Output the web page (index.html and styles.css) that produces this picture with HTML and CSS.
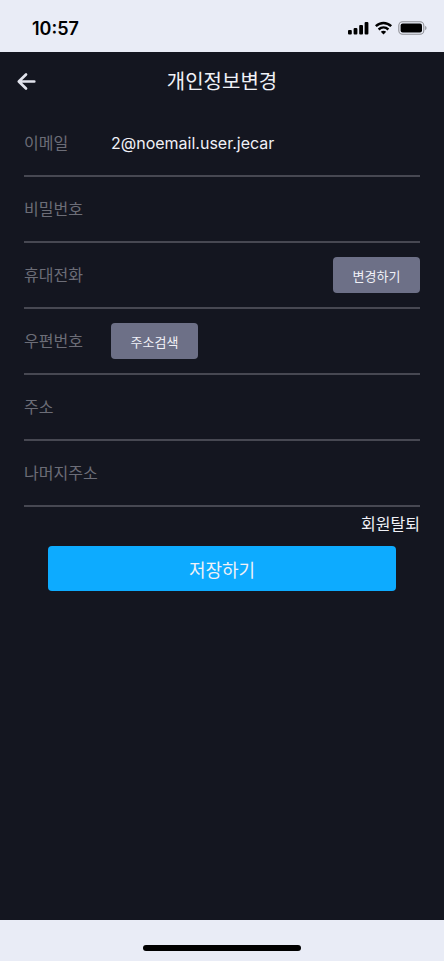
FILE: index.html
```html
<!DOCTYPE html>
<html lang="ko">
<head>
<meta charset="utf-8">
<meta name="viewport" content="width=device-width, initial-scale=1">
<title>개인정보변경</title>
<link rel="stylesheet" href="styles.css">
</head>
<body>
<div class="status">
  <time class="clock">10:57</time>
  <div class="indicators">
    <svg width="22" height="14" viewBox="0 0 22 14" aria-hidden="true">
      <rect x="0" y="9" width="3.800" height="4.600" rx="1"/>
      <rect x="5.600" y="7" width="3.800" height="6.600" rx="1"/>
      <rect x="11.200" y="4" width="3.800" height="9.600" rx="1"/>
      <rect x="16.600" y="1" width="3.800" height="12.600" rx="1"/>
    </svg>
    <svg width="18" height="14" viewBox="0 0 18 14" aria-hidden="true">
      <g fill="none" stroke="#000" stroke-width="2.400">
        <path d="M.8 5.200C5.300.9 11.700.9 16.200 5.200"/>
        <path d="M3.600 8.500C6.500 5.900 10.500 5.900 13.400 8.500"/>
      </g>
      <path d="M5.800 10.800C7.400 9.500 9.600 9.500 11.200 10.800L8.500 13.600Z"/>
    </svg>
    <svg width="30" height="14" viewBox="0 0 30 14" aria-hidden="true">
      <rect x=".8" y=".8" width="25" height="12.400" rx="3.800" fill="none" stroke="#8f9096" stroke-width="1.100"/>
      <rect x="2.600" y="2.600" width="21.400" height="8.800" rx="2"/>
      <path d="M27.200 4.800C29 5.600 29 8.400 27.200 9.200Z" fill="#8f9096"/>
    </svg>
  </div>
</div>
<div class="screen">
  <header class="bar">
    <button class="back" type="button" aria-label="뒤로">
      <svg width="20" height="20" viewBox="0 0 20 20" aria-hidden="true">
        <path d="M10 2.500L2.800 9.500L10 16.500M3.500 9.500H18.300" fill="none" stroke="#e1e3ec" stroke-width="2.700" stroke-linecap="round" stroke-linejoin="round"/>
      </svg>
    </button>
    <h1 class="title">개인정보변경</h1>
  </header>
  <form class="form">
    <div class="row">
      <label class="label" for="email">이메일</label>
      <input class="field" id="email" type="text" value="2@noemail.user.jecar">
    </div>
    <div class="row">
      <label class="label" for="password">비밀번호</label>
      <input class="field" id="password" type="password">
    </div>
    <div class="row">
      <label class="label" for="phone">휴대전화</label>
      <input class="field" id="phone" type="tel">
      <button class="small" type="button">변경하기</button>
    </div>
    <div class="row">
      <label class="label" for="find">우편번호</label>
      <button class="small" id="find" type="button">주소검색</button>
    </div>
    <div class="row">
      <label class="label" for="address">주소</label>
      <input class="field" id="address" type="text">
    </div>
    <div class="row">
      <label class="label" for="detail">나머지주소</label>
      <input class="field" id="detail" type="text">
    </div>
    <a class="leave" href="#">회원탈퇴</a>
    <button class="save" type="submit">저장하기</button>
  </form>
</div>
<footer class="home"><span class="handle"></span></footer>
</body>
</html>
```
FILE: styles.css
```css
* {
  box-sizing: border-box;
}

body {
  display: flex;
  flex-direction: column;
  min-height: 100vh;
  margin: 0;
  background: #e9ecf6;
  color: #f0f1f7;
  font-family: Inter, "Noto Sans CJK KR", sans-serif;
  font-size: 16px;
}

button,
input {
  border: 0;
  padding: 0;
  color: inherit;
  font: inherit;
}

button {
  cursor: pointer;
}

.status {
  display: flex;
  align-items: center;
  justify-content: space-between;
  height: 52px;
  padding: 4px 16px 0 32px;
  color: #000;
}

.clock {
  font-size: 18px;
  font-weight: 600;
}

.indicators {
  display: flex;
  gap: 5px;
}

.screen {
  flex: 1;
  background: #141620;
}

.bar {
  display: grid;
  grid-template-columns: 40px 1fr 40px;
  align-items: center;
  height: 59px;
  padding: 0 16px;
}

.back {
  display: flex;
  background: none;
}

.title {
  margin: 0;
  font-size: 20px;
  font-weight: 400;
  line-height: 24px;
  text-align: center;
}

.form {
  display: flex;
  flex-direction: column;
  padding: 0 24px;
}

.row {
  display: flex;
  align-items: center;
  height: 66px;
  border-bottom: 2px solid #474852;
}

.label {
  flex: 0 0 87px;
  color: #6c6d77;
  line-height: 24px;
  white-space: nowrap;
}

.field {
  flex: 1;
  min-width: 0;
  background: none;
  outline: 0;
}

.small {
  width: 87px;
  height: 36px;
  border-radius: 4px;
  background: #6d7087;
  font-size: 13px;
}

.leave {
  align-self: flex-end;
  margin-top: 5px;
  color: inherit;
  line-height: 24px;
  text-decoration: none;
}

.save {
  height: 45px;
  margin: 10px 24px 0;
  border-radius: 4px;
  background: #0dabff;
  font-size: 18px;
}

.home {
  display: flex;
  justify-content: center;
  height: 41px;
  padding-top: 25px;
}

.handle {
  width: 158px;
  height: 6px;
  border-radius: 3px;
  background: #000;
}
```
